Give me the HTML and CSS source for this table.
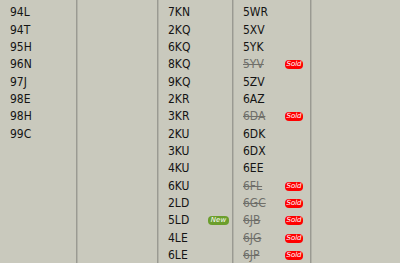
FILE: index.html
```html
<!DOCTYPE html>
<html>
<head>
<meta charset="utf-8">
<link rel="stylesheet" href="styles.css">
</head>
<body>
<div class="board">
  <div class="col c1">
    <div class="row"><span class="reg">94L</span></div>
    <div class="row"><span class="reg">94T</span></div>
    <div class="row"><span class="reg">95H</span></div>
    <div class="row"><span class="reg">96N</span></div>
    <div class="row"><span class="reg">97J</span></div>
    <div class="row"><span class="reg">98E</span></div>
    <div class="row"><span class="reg">98H</span></div>
    <div class="row"><span class="reg">99C</span></div>
  </div>
  <div class="col c2"></div>
  <div class="col c3">
    <div class="row"><span class="reg">7KN</span></div>
    <div class="row"><span class="reg">2KQ</span></div>
    <div class="row"><span class="reg">6KQ</span></div>
    <div class="row"><span class="reg">8KQ</span></div>
    <div class="row"><span class="reg">9KQ</span></div>
    <div class="row"><span class="reg">2KR</span></div>
    <div class="row"><span class="reg">3KR</span></div>
    <div class="row"><span class="reg">2KU</span></div>
    <div class="row"><span class="reg">3KU</span></div>
    <div class="row"><span class="reg">4KU</span></div>
    <div class="row"><span class="reg">6KU</span></div>
    <div class="row"><span class="reg">2LD</span></div>
    <div class="row"><span class="reg">5LD</span><span class="badge new">New</span></div>
    <div class="row"><span class="reg">4LE</span></div>
    <div class="row"><span class="reg">6LE</span></div>
  </div>
  <div class="col c4">
    <div class="row"><span class="reg">5WR</span></div>
    <div class="row"><span class="reg">5XV</span></div>
    <div class="row"><span class="reg">5YK</span></div>
    <div class="row"><span class="reg sold">5YV</span><span class="badge sold-b">Sold</span></div>
    <div class="row"><span class="reg">5ZV</span></div>
    <div class="row"><span class="reg">6AZ</span></div>
    <div class="row"><span class="reg sold">6DA</span><span class="badge sold-b">Sold</span></div>
    <div class="row"><span class="reg">6DK</span></div>
    <div class="row"><span class="reg">6DX</span></div>
    <div class="row"><span class="reg">6EE</span></div>
    <div class="row"><span class="reg sold">6FL</span><span class="badge sold-b">Sold</span></div>
    <div class="row"><span class="reg sold">6GC</span><span class="badge sold-b">Sold</span></div>
    <div class="row"><span class="reg sold">6JB</span><span class="badge sold-b">Sold</span></div>
    <div class="row"><span class="reg sold">6JG</span><span class="badge sold-b">Sold</span></div>
    <div class="row"><span class="reg sold">6JP</span><span class="badge sold-b">Sold</span></div>
  </div>
  <div class="col c5"></div>
</div>
</body>
</html>
```
FILE: styles.css
```css
html, body {
  margin: 0;
  padding: 0;
  background: #c9c9bd;
  height: 100%;
  overflow: hidden;
}
body {
  font-family: "DejaVu Sans Condensed", "DejaVu Sans", sans-serif;
  font-size: 12px;
  color: #141414;
}
.board {
  display: flex;
  height: 263px;
}
.col {
  box-sizing: border-box;
  border-right: 1px solid #9a9a92;
  box-shadow: 1px 0 0 #b3b3a9;
  padding-left: 10px;
  padding-top: 4px;
}
.c1 { width: 77px; }
.c2 { width: 81px; }
.c3 { width: 75px; padding-right: 3px; }
.c4 { width: 78px; padding-right: 7px; }
.c5 { flex: 1; border-right: none; box-shadow: none; }
.row {
  height: 17.36px;
  display: flex;
  align-items: center;
  justify-content: space-between;
}
.reg { line-height: 17px; }
.sold {
  color: #6f6f6a;
  text-decoration: line-through;
}
.badge {
  font-family: "DejaVu Sans", sans-serif;
  font-size: 7px;
  font-style: italic;
  color: #fff;
  border-radius: 4px;
  height: 9px;
  line-height: 9px;
  text-align: center;
}
.sold-b {
  background: #ff0000;
  width: 18px;
}
.new {
  background: #6b9e2c;
  width: 21px;
}
```
